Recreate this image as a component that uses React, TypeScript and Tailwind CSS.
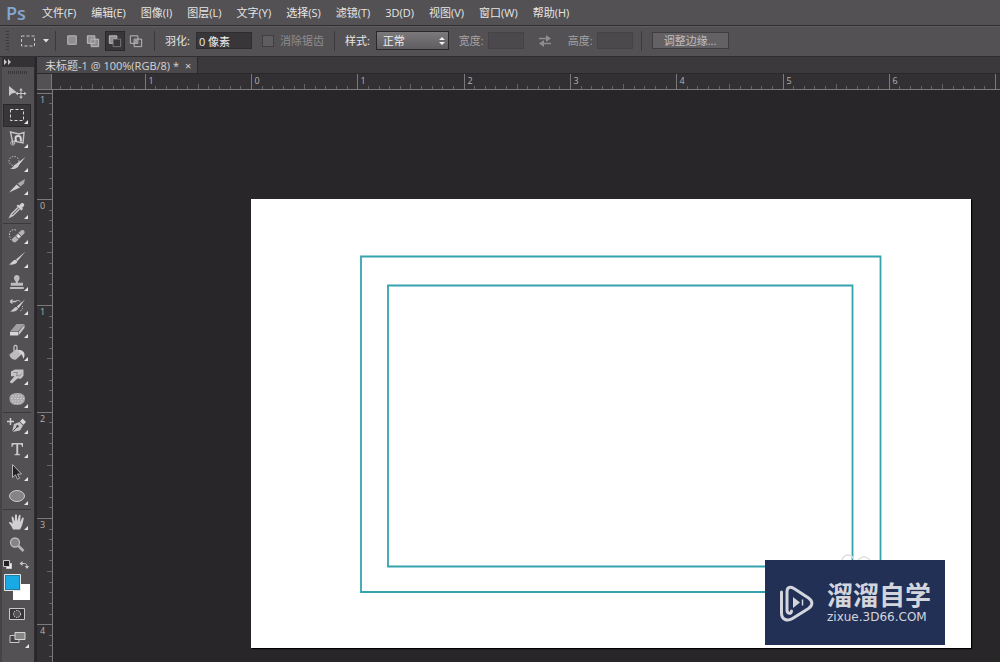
import { useState } from "react";
import type { ReactNode } from "react";
import clsx from "clsx";

const menus = [
  "文件(F)",
  "编辑(E)",
  "图像(I)",
  "图层(L)",
  "文字(Y)",
  "选择(S)",
  "滤镜(T)",
  "3D(D)",
  "视图(V)",
  "窗口(W)",
  "帮助(H)",
];

type Tool = { name: string; icon: ReactNode; single?: boolean };

// every tool icon is drawn on a 20x20 grid
const groups: { size: string; tools: Tool[] }[] = [
  {
    size: "h-[142px]",
    tools: [
      {
        name: "移动工具",
        single: true,
        icon: (
          <>
            <path d="M2 4v10l3-2.600 5-.8z" fill="#c8c8c8" />
            <path d="M14 7v9M9.500 11.500h9" stroke="#c8c8c8" strokeWidth="1" />
            <path d="M14 6l-1.800 2.400h3.600zM14 17l-1.800-2.400h3.600zM8.500 11.500l2.400-1.800v3.600zM19.500 11.500l-2.400-1.800v3.600z" fill="#c8c8c8" />
          </>
        ),
      },
      {
        name: "矩形选框工具",
        icon: <rect x="3.500" y="4.500" width="13" height="11" fill="none" stroke="#d6d6d6" strokeDasharray="3 2" />,
      },
      {
        name: "磁性套索工具",
        icon: (
          <>
            <path d="M6 15L3.500 3l8.500 2 5-1.500-1 10.500-9.500-2" fill="none" stroke="#c4c4c4" strokeWidth="1.400" />
            <path d="M9 12.500L8.500 9c0-2.800 5-2.800 5.200 0l.3 3.500" fill="none" stroke="#d6d6d6" strokeWidth="2" />
            <path d="M5 12c-2 1-1.500 3.800.5 4s3-1.500 1.500-3" fill="none" stroke="#c4c4c4" />
          </>
        ),
      },
      {
        name: "快速选择工具",
        icon: (
          <>
            <ellipse cx="7" cy="8" rx="5" ry="4.500" fill="none" stroke="#c4c4c4" strokeDasharray="1.500 1.300" />
            <path d="M18.500 4L11.500 12.500l-2-1.800z" fill="#d6d6d6" />
            <path d="M10 10.700l2 2C10 16 6 16.500 3 15.800c3-.5 3.500-4.500 7-5.100z" fill="#c8c8c8" />
          </>
        ),
      },
      {
        name: "切片工具",
        icon: (
          <>
            <path d="M2 16.500l7.500-8 3.500 3z" fill="#d0d0d0" />
            <path d="M10.500 7.500L18 3l-1 4.500-3.500 3z" fill="#a9a9a9" />
          </>
        ),
      },
      {
        name: "吸管工具",
        icon: (
          <>
            <path d="M11 7.500L4.500 14 3 17l3-1.500L12.500 9" fill="none" stroke="#c8c8c8" strokeWidth="1.400" />
            <path d="M9.500 6l1.500-1.500 1.300 1C13.500 3.500 15 2.500 16.500 3.500s.7 3-1.400 4.200l.9 1.300-1.500 1.500z" fill="#d0d0d0" />
          </>
        ),
      },
    ],
  },
  {
    size: "h-[188px]",
    tools: [
      {
        name: "污点修复画笔工具",
        icon: (
          <>
            <path d="M9 4C5 3 2 5 2.500 9s2 6 3.500 5.500" fill="none" stroke="#c4c4c4" strokeDasharray="1.500 1.300" />
            <path d="M5.500 12.500l8.500-8c2-1.700 4.800 1 3.200 3l-8 8.200c-2.200 1.800-5.500-1-3.700-3.200z" fill="#b4b4b4" />
            <path d="M8.500 10l3.600 3.600M11.300 7.200l3.600 3.600" stroke="#5b5b5b" />
            <circle cx="11.500" cy="10.300" r="1.200" fill="#ececec" />
          </>
        ),
      },
      {
        name: "画笔工具",
        icon: (
          <>
            <path d="M18.500 2.500L10.500 12 9 10.500z" fill="#d6d6d6" />
            <path d="M8.700 10.700l1.800 1.800C9.500 15.500 5 16 1.500 15.500c3-.8 3.700-4.500 7.200-4.800z" fill="#d0d0d0" />
          </>
        ),
      },
      {
        name: "仿制图章工具",
        icon: (
          <path d="M8.700 9.500C6 7 6.500 3 9.800 3S13.500 7 11 9.500v1.300h5v3H3.800v-3h4.900zM3 15h13.800v2H3z" fill="#bcbcbc" />
        ),
      },
      {
        name: "历史记录画笔工具",
        icon: (
          <>
            <path d="M3 5.500h6.500M3 5.500l2.500-2M3 5.500l2.500 2" stroke="#c4c4c4" strokeWidth="1.300" fill="none" />
            <path d="M9 4.500c3-.5 4 .5 5 1.800" fill="none" stroke="#a9a9a9" />
            <path d="M18 3.500l-6.500 8.700-1.700-1.600z" fill="#d6d6d6" />
            <path d="M9.500 11l1.700 1.600C10 15.500 6 16 3 15.500c2.800-.8 3.200-4 6.500-4.500z" fill="#c8c8c8" />
            <path d="M13 15c2.500-.5 3-3 2.500-5" fill="none" stroke="#a9a9a9" strokeDasharray="1.500 1" />
          </>
        ),
      },
      {
        name: "橡皮擦工具",
        icon: (
          <>
            <path d="M3 12.500L9.500 5h8L11 12.500z" fill="#a0a0a0" />
            <path d="M3 13h8v3.500H3z" fill="#d6d6d6" />
            <path d="M11.500 13l6-7.500V9l-6 7.500z" fill="#c4c4c4" />
          </>
        ),
      },
      {
        name: "油漆桶工具",
        icon: (
          <>
            <path d="M2.500 11.500l7-5.500 5.500 5-6 5.500c-3 1-6.500-2-6.500-5z" fill="#bcbcbc" />
            <path d="M7 8.500V4c0-2.200 3-2.200 3 0v5" fill="none" stroke="#c8c8c8" strokeWidth="1.200" />
            <path d="M10.500 7c4-.5 7 1.500 7 4.500 0 2-.5 3.500-1.200 4.200-.8-2.500-.8-4.200-2.800-5.200z" fill="#d6d6d6" />
          </>
        ),
      },
      {
        name: "涂抹工具",
        icon: (
          <>
            <path d="M3 15.500l4.500-5.200H4V5.500l4-2h8.500v6.300l-2.500 3-3.500-.3L5.500 17c-1.300.7-2.800-.5-2.500-1.500z" fill="#c4c4c4" />
            <path d="M6.500 6.500h4l-1 3 3 .5 2-2.500" fill="none" stroke="#8a8a8a" />
          </>
        ),
      },
      {
        name: "海绵工具",
        icon: (
          <>
            <path d="M2.500 9c0-3.500 3.500-5 8-5s7.500 2 7.500 5.500-2 6.500-8 6.500-7.500-3-7.500-7z" fill="#a9a9a9" />
            <path d="M5 7h10M4 9.500h13M5 12h11M7 14.300h7" stroke="#d6d6d6" strokeDasharray="1.500 1.500" />
          </>
        ),
      },
    ],
  },
  {
    size: "h-24",
    tools: [
      {
        name: "添加锚点工具",
        icon: (
          <>
            <path d="M3.500 3v7M0 6.500h7" stroke="#d0d0d0" strokeWidth="1.500" />
            <path d="M5 17l2-8 5.500-2 3.500 3.500-3 5z" fill="#c4c4c4" />
            <path d="M5 17l5-5" stroke="#4b4b4b" />
            <circle cx="10.500" cy="11.300" r="1.200" fill="#4b4b4b" />
            <path d="M13 6.500l2.500-3 3.500 3.500-2.600 2.700z" fill="#d6d6d6" />
          </>
        ),
      },
      {
        name: "横排文字工具",
        icon: (
          <path d="M4.500 4h11.500v4h-.9c-.4-1.800-1-2.400-2.400-2.400h-1.500V14c0 1 .4 1.300 1.900 1.300v.9H7.500v-.9c1.400 0 1.800-.3 1.800-1.300V5.600H7.800C6.400 5.600 5.800 6.200 5.400 8h-.9z" fill="#c8c8c8" />
        ),
      },
      {
        name: "路径选择工具",
        icon: (
          <path d="M5.500 2.500v13l3-2.700 2 4.400 2-1-2-4.200h4z" fill="#222" stroke="#b4b4b4" strokeWidth="1" />
        ),
      },
      {
        name: "椭圆工具",
        icon: <ellipse cx="10" cy="10" rx="7.500" ry="5.500" fill="#858585" stroke="#c8c8c8" />,
      },
    ],
  },
  {
    size: "h-[47px]",
    tools: [
      {
        name: "抓手工具",
        icon: (
          <path d="M6 17.500C5 14.500 3 12 1.800 10.700c.5-1.200 2-1 4 1L4.500 5.500c.3-1.200 1.500-1.200 1.900 0l1.400 4L8 3.200c.4-1.200 1.600-1.200 1.900 0l.4 6 1.500-5.800c.5-1 1.700-.8 1.800.3l-.5 6.300 2-4c.6-.9 1.800-.4 1.600.7-.8 4-1.700 8-3.700 10.800z" fill="#d0d0d0" />
        ),
      },
      {
        name: "缩放工具",
        single: true,
        icon: (
          <>
            <circle cx="8" cy="7.500" r="4.500" fill="#858585" stroke="#bcbcbc" strokeWidth="1.300" />
            <path d="M11.500 11l5 5" stroke="#b4b4b4" strokeWidth="2.600" />
          </>
        ),
      },
    ],
  },
];

function Corner() {
  return (
    <svg viewBox="0 0 4 4" className="absolute right-0.5 bottom-0.5 size-1" aria-hidden="true">
      <path d="M4 0v4H0z" fill="#e6e6e6" />
    </svg>
  );
}

function Divider() {
  return <div className="h-5 w-px bg-[#3b393b]" />;
}

function MenuBar() {
  return (
    <header className="flex h-[26px] items-center border-b border-[#2f2d2f] bg-[#535153] pl-1.5">
      <div className="w-9 text-[18px] leading-6 font-semibold text-[#84a7d3]">Ps</div>
      <nav className="flex gap-[15px] text-[11px] leading-4 text-[#e6e6e6]">
        {menus.map((menu) => (
          <button key={menu} className="whitespace-nowrap">
            {menu}
          </button>
        ))}
      </nav>
    </header>
  );
}

const modes = [
  { name: "新选区", icon: <path d="M4 3h9v9H4z" fill="#8f8f8f" stroke="#c0c0c0" /> },
  {
    name: "添加到选区",
    icon: (
      <>
        <path d="M2.500 3h8v8h-8zM6.500 6.500h8v8h-8z" fill="#8f8f8f" stroke="#c0c0c0" />
        <path d="M7 7h3v3.500H7z" fill="#8f8f8f" />
      </>
    ),
  },
  {
    name: "从选区减去",
    icon: (
      <>
        <path d="M2.500 3h8v3h-4v5h-4z" fill="#8f8f8f" stroke="#c0c0c0" />
        <path d="M6.500 6.500h8v8h-8z" fill="#383639" stroke="#7b7b7b" />
      </>
    ),
  },
  {
    name: "与选区交叉",
    icon: (
      <>
        <path d="M2.500 3h8v8h-8zM6.500 6.500h8v8h-8z" fill="none" stroke="#c0c0c0" />
        <path d="M7 7h3v3.500H7z" fill="#9f9f9f" />
      </>
    ),
  },
];

function OptionsBar() {
  const [mode, setMode] = useState(2);

  return (
    <div className="flex h-[31px] items-center border-t border-b border-t-[#5f5d5f] border-b-[#2f2d2f] bg-[#535153] pb-0.5 text-[11px] leading-4 whitespace-nowrap text-[#e6e6e6]">
      <div className="ml-1.5 h-5 w-[3px] bg-[repeating-linear-gradient(#3b393b_0_1px,#535153_1px_3px)]" />
      <button aria-label="工具预设" className="ml-2.5 flex w-9 items-center gap-1.5">
        <svg viewBox="0 0 18 16" className="h-4 w-[18px]">
          <rect x="2.500" y="3" width="13" height="10" fill="none" stroke="#c8c8c8" strokeDasharray="3 2" />
        </svg>
        <svg viewBox="0 0 6 4" className="h-1 w-1.5">
          <path d="M0 0h6L3 3.500z" fill="#e0e0e0" />
        </svg>
      </button>
      <Divider />
      {/* selection modes */}
      <div className="mx-1 ml-1.5 flex w-[84px] justify-between">
        {modes.map((item, index) => (
          <button
            key={item.name}
            aria-label={item.name}
            onClick={() => setMode(index)}
            className={clsx(
              "flex size-5 items-center justify-center border",
              mode === index ? "border-[#2a282a] bg-[#383639]" : "border-transparent",
            )}
          >
            <svg viewBox="0 0 17 17" className="size-4">
              {item.icon}
            </svg>
          </button>
        ))}
      </div>
      <div className="ml-1">
        <Divider />
      </div>
      <label className="ml-2.5 flex items-center gap-1.5">
        羽化:
        <input defaultValue="0 像素" className="h-[17px] w-14 border border-[#2f2d2f] bg-[#383639] px-0.5 text-[#f0f0f0]" />
      </label>
      <label className="ml-2.5 flex items-center gap-1.5 text-[#8f8d8f]">
        <input type="checkbox" disabled className="size-3 appearance-none border border-[#413f41] bg-[#5f5d5f]" />
        消除锯齿
      </label>
      <div className="ml-2.5">
        <Divider />
      </div>
      <label className="ml-2.5 flex items-center gap-1.5">
        样式:
        <span className="relative">
          <select className="block h-[19px] w-[73px] appearance-none border border-[#2a282a] bg-linear-to-b from-[#7b797b] to-[#5f5d5f] pl-1.5 text-[#f0f0f0]">
            <option>正常</option>
            <option>固定比例</option>
            <option>固定大小</option>
          </select>
          <svg viewBox="0 0 6 8" className="pointer-events-none absolute top-1.5 right-1 h-2 w-1.5">
            <path d="M3 0l3 3H0zM3 8l3-3H0z" fill="#f0f0f0" />
          </svg>
        </span>
      </label>
      <label className="ml-2.5 flex items-center gap-1 text-[#a5a3a5]">
        宽度:
        <input disabled className="h-[17px] w-9 border border-[#454345] bg-[#4b494b]" />
      </label>
      <button disabled aria-label="高度和宽度互换" className="ml-3.5">
        <svg viewBox="0 0 14 12" className="h-3 w-3.5">
          <path d="M1 3.500h8M5 8.500h8" stroke="#8f8d8f" strokeWidth="1.500" />
          <path d="M8 0l5 3.500L8 7zM6 5L1 8.500 6 12z" fill="#8f8d8f" />
        </svg>
      </button>
      <label className="ml-4 flex items-center gap-1 text-[#a5a3a5]">
        高度:
        <input disabled className="h-[17px] w-9 border border-[#454345] bg-[#4b494b]" />
      </label>
      <div className="ml-2">
        <Divider />
      </div>
      <button className="ml-2.5 h-[17px] w-[77px] border border-[#3f3d3f] bg-[#636163] text-[#c0bec0]">
        <span className="block leading-[14px]">调整边缘...</span>
      </button>
    </div>
  );
}

function ToolBox() {
  const [active, setActive] = useState("矩形选框工具");

  return (
    <aside className="flex w-[35px] shrink-0 flex-col border-r border-l-2 border-[#2f2d2f] border-l-[#454345] bg-[#535153]">
      <div className="h-2.5 bg-[#343234] pt-0.5 pl-0.5">
        <svg viewBox="0 0 8 6" className="h-1.5 w-2">
          <path d="M0 0l3 3-3 3zM4 0l3 3-3 3z" fill="#c8c8c8" />
        </svg>
      </div>
      <div className="mx-1.5 mt-1 mb-1.5 h-[3px] bg-[repeating-linear-gradient(90deg,#383639_0_1px,#535153_1px_2px)]" />
      <div className="mr-[3px] ml-px flex flex-col gap-px">
        {groups.map((group, index) => (
          <div key={group.size} className={clsx("grid auto-rows-fr", group.size, index > 0 && "border-t border-[#3b393b]")}>
            {group.tools.map((tool) => (
              <button
                key={tool.name}
                aria-label={tool.name}
                onClick={() => setActive(tool.name)}
                className={clsx(
                  "relative flex items-center justify-center border",
                  active === tool.name ? "border-[#2a282a] bg-[#383639]" : "border-transparent",
                )}
              >
                <svg viewBox="0 0 20 20" className="size-5">
                  {tool.icon}
                </svg>
                {!tool.single && <Corner />}
              </button>
            ))}
          </div>
        ))}
      </div>
      {/* foreground and background colours */}
      <svg viewBox="0 0 30 42" className="mt-1 h-[42px] w-[30px]" role="img" aria-label="前景色和背景色">
        <path d="M4.500 3.500h5v5h-5z" fill="#f0f0f0" stroke="#c8c8c8" />
        <path d="M1.500.5h6v6h-6z" fill="#222" stroke="#c8c8c8" />
        <path d="M19 3.500h3.500c1.500 0 2.500 1 2.500 3" fill="none" stroke="#c8c8c8" />
        <path d="M20.500 1v5L17.500 3.500zM22.800 6h4.400L25 9z" fill="#c8c8c8" />
        <path d="M11 24h17v16H11z" fill="#fff" />
        <path d="M2.500 14.500h16v16h-16z" fill="#19a9e5" stroke="#e6e6e6" />
        <path d="M3.500 15.500h14v14h-14z" fill="none" stroke="#2f2d2f" strokeOpacity=".35" />
      </svg>
      <button aria-label="以快速蒙版模式编辑" className="mr-[3px] ml-px flex h-6 items-center justify-center">
        <svg viewBox="0 0 16 12" className="h-3 w-4">
          <path d="M.5.5h15v11H.5z" fill="#383639" stroke="#c8c8c8" />
          <circle cx="8" cy="6" r="3.500" fill="#535153" stroke="#e0e0e0" strokeDasharray="1.500 1" />
        </svg>
      </button>
      <button aria-label="更改屏幕模式" className="relative mr-[3px] ml-px flex h-6 items-center justify-center">
        <svg viewBox="0 0 17 14" className="h-3.5 w-[17px]">
          <path d="M1 4.500h9v7H1z" fill="#444" stroke="#c8c8c8" />
          <path d="M6 1.500h10v7H6z" fill="#858585" stroke="#d6d6d6" />
        </svg>
        <Corner />
      </button>
    </aside>
  );
}

// one inch at 100% zoom
const INCH = 106.3;

function Ruler({ vertical, zero }: { vertical?: boolean; zero: number }) {
  const length = vertical ? window.innerHeight - 90 : window.innerWidth - 53;
  const step = INCH / 10;
  const ticks: ReactNode[] = [];
  for (let i = Math.ceil(-zero / step); zero + i * step < length; i++) {
    const at = Math.round(zero + i * step) + 0.5;
    const size = i % 10 === 0 ? 16 : i % 5 === 0 ? 5 : 3;
    ticks.push(
      <path
        key={i}
        d={vertical ? `M15 ${at}h-${size}` : `M${at} 15v-${size}`}
        stroke={i % 10 === 0 ? "#7b797b" : "#656365"}
      />,
    );
    if (i % 10 === 0 && at + 10 < length) {
      ticks.push(
        <text key={`label${i}`} x={vertical ? 3 : at + 3} y={vertical ? at + 9 : 10} fontSize="9" fill="#b4b2b4">
          {Math.abs(i / 10)}
        </text>,
      );
    }
  }
  return (
    <svg className={vertical ? "h-full w-4" : "h-4 w-full"} aria-hidden="true">
      {ticks}
      <path d={vertical ? "M15.500 0v4000" : "M0 15.500h6000"} stroke="#7b797b" />
    </svg>
  );
}

function Watermark() {
  return (
    <div className="absolute right-[26px] bottom-[3px] flex h-[85px] w-[180px] items-center gap-3 bg-[#223056] pl-3.5 text-[#d3d5dd]">
      <svg viewBox="0 0 36 38" className="h-[38px] w-9 shrink-0" aria-hidden="true">
        <path
          d="M2.500 8v21c0 7 6 8.500 11 5.500l16-10c4.500-3 4.500-7.500 0-10.500L15 4.500C10.500 2 8 3.500 8 8v18c0 4 4.500 4.500 4.500 1"
          fill="none"
          stroke="currentColor"
          strokeWidth="3"
          strokeLinecap="round"
          strokeLinejoin="round"
        />
        <path d="M14 13l7 5.500-7 5.500z" fill="currentColor" />
        <path d="M23.500 15.500v6" stroke="currentColor" strokeWidth="1.500" />
      </svg>
      <div>
        <div className="text-[26px] leading-7 font-bold">溜溜自学</div>
        <div className="font-['DejaVu_Sans'] text-[12px] leading-4">zixue.3D66.COM</div>
      </div>
    </div>
  );
}

function Workspace() {
  return (
    <main className="ml-0.5 flex min-w-0 flex-1 flex-col">
      {/* document tabs */}
      <div className="flex h-4 shrink-0 bg-[#3b393b]">
        <div className="flex items-center gap-1.5 border-r border-[#2a282a] bg-[#4b494b] pt-0.5 pr-1.5 pl-2 text-[11px] leading-4 whitespace-nowrap text-[#d6d4d6]">
          未标题-1 @ 100%(RGB/8) *
          <button aria-label="关闭">×</button>
        </div>
      </div>
      <div className="flex h-[17px] shrink-0 border-t border-[#2a282a] bg-[#323032]">
        <div className="w-[15px] shrink-0 border-r border-b border-[#7b797b] bg-[#535153]" />
        <Ruler zero={199} />
      </div>
      <div className="flex min-h-0 flex-1">
        <div className="w-4 shrink-0 bg-[#323032]">
          <Ruler vertical zero={109} />
        </div>
        <div className="min-w-0 flex-1 overflow-hidden bg-[#282628] pt-[109px] pl-[198px]">
          <div className="relative h-[449px] w-[720px] bg-white shadow-[1px_1px_1px_#000]">
            <svg viewBox="0 0 720 449" className="size-full" role="img" aria-label="两个矩形边框">
              <path d="M110 57.500h519.500v335.500H110z" fill="none" stroke="#35a3ae" strokeWidth="1.800" />
              <path d="M137 86.500h464.500v281H137z" fill="none" stroke="#35a3ae" strokeWidth="1.800" />
              <ellipse cx="597" cy="362" rx="6" ry="6" fill="none" stroke="#dedede" strokeWidth="1.500" />
              <ellipse cx="613" cy="363" rx="6" ry="5" fill="none" stroke="#dedede" strokeWidth="1.500" />
            </svg>
            <Watermark />
          </div>
        </div>
      </div>
    </main>
  );
}

export default function App() {
  return (
    <div className="flex h-screen flex-col overflow-hidden bg-[#282628] font-['Open_Sans','Noto_Sans_CJK_SC',sans-serif]">
      <MenuBar />
      <OptionsBar />
      <div className="flex min-h-0 flex-1">
        <ToolBox />
        <Workspace />
      </div>
    </div>
  );
}
